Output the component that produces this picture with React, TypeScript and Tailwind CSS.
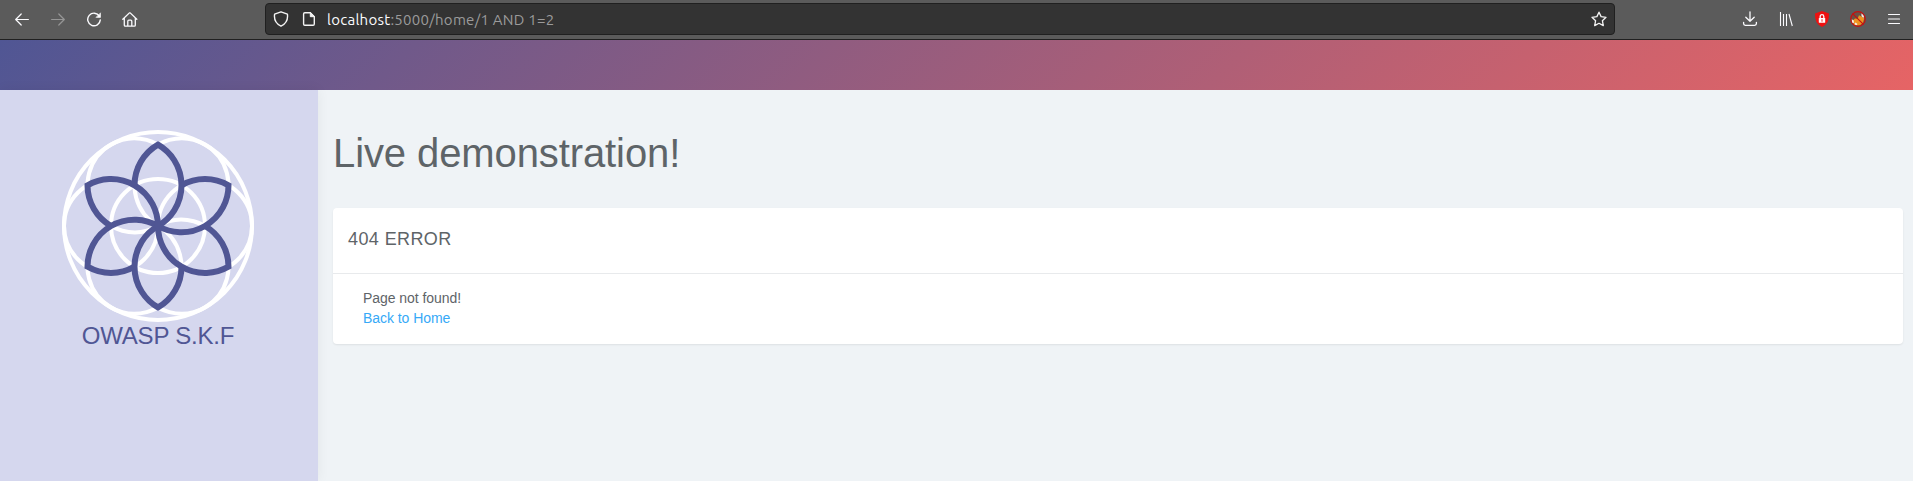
import type { ReactNode } from "react";

function Icon({ children, className = "" }: { children: ReactNode; className?: string }) {
  return (
    <svg
      viewBox="0 0 16 16"
      className={`h-4 w-4 shrink-0 ${className}`}
      fill="none"
      stroke="currentColor"
      strokeWidth="1.2"
      strokeLinecap="round"
      strokeLinejoin="round"
    >
      {children}
    </svg>
  );
}

function Toolbar() {
  return (
    <header className="flex h-10 shrink-0 items-start border-b border-[#202020] bg-[#5b5b5b] text-[#fbfbfe]">
      <nav className="flex w-[265px] gap-5 pt-[11px] pl-[14px]">
        <Icon>
          <path d="M14.4 8.5H1.7M7.2 3 1.7 8.5 7.2 14" />
        </Icon>
        <Icon className="text-[#969696]">
          <path d="M1.6 8.5h12.7M8.8 3l5.5 5.5L8.8 14" />
        </Icon>
        <Icon>
          <path d="M13.4 5.2A6.3 6.3 0 1 0 14.3 8.9" strokeWidth="1.4" />
          <path d="M14.5 2.2v4.2h-4.2z" fill="currentColor" strokeWidth="0.6" />
        </Icon>
        <Icon>
          <path d="M.8 8.3 7.4 1.9h.8l6.6 6.4M2.3 7v7.2q0 1 1 1h9q1 0 1-1V7M5.8 15V10.2q0-1 1-1h2q1 0 1 1V15" strokeWidth="1.3" />
        </Icon>
      </nav>
      <div className="mt-[3px] flex h-8 w-[1350px] items-center rounded border border-[#202020] bg-[#333333] pr-[7px] pl-[7px]">
        <Icon className="text-[#f4f4f4]">
          <path d="M8 .8 14.4 3.1Q15.6 11.5 8 15.2.4 11.5 1.6 3.1z" strokeWidth="1.4" />
        </Icon>
        <Icon className="ml-3 text-[#f4f4f4]">
          <path d="M9.3 1.7H3.8q-1.2 0-1.2 1.2v10.2q0 1.2 1.2 1.2h8.3q1.2 0 1.2-1.2V5.7z" strokeWidth="1.4" />
          <path d="M9.3 1.7v4h4z" fill="currentColor" strokeWidth="1" />
        </Icon>
        <span className="ml-[10px] pt-0.5 font-['Ubuntu','Noto_Sans',sans-serif] text-[15px] leading-5 tracking-[0.26px] whitespace-pre text-[#9b9b9b]">
          <span className="text-[#fbfbfe]">localhost</span>:5000/home/1 AND 1=2
        </span>
        <Icon className="ml-auto text-[#f4f4f4]">
          <path d="m8 1.2 2.1 4.4 4.9.7-3.6 3.4.9 4.9L8 12.3l-4.3 2.3.9-4.9L1 6.3l4.9-.7z" strokeWidth="1.3" />
        </Icon>
      </div>
      <div className="flex gap-5 pt-[11px] pl-[127px]">
        <Icon>
          <path d="M8 .8v9.4M3.8 6.2 8 10.3l4.2-4.1M1.6 11.3v1.3q0 1.7 1.7 1.7h9.4q1.7 0 1.7-1.7v-1.3" strokeWidth="1.3" />
        </Icon>
        <Icon>
          <path d="M2.5 1v14M5.5 3v12M8.5 3v12M11 3l3.3 12" strokeLinecap="butt" strokeWidth="1.1" />
        </Icon>
        <Icon>
          <path d="M8 0 15 2.4Q15.7 12.5 8 16 .3 12.5 1 2.4z" fill="#ee1111" stroke="none" />
          <rect x="4.8" y="7" width="6.4" height="4.8" rx=".5" fill="#ffffff" stroke="none" />
          <path d="M6.2 7V5.4q0-1.7 1.8-1.7t1.8 1.7V7" strokeWidth="1.3" />
          <path d="M8 8.6v1.7" stroke="#ee1111" strokeWidth=".9" />
        </Icon>
        <Icon>
          <circle cx="8" cy="8" r="7.2" fill="#6b5145" stroke="none" />
          <path d="M2.5 9.8 5 7.5l2.6.3L9 4.2l2.7 1.5 2.5 1.5-1.1 4.6-3.5 2.6-5.5-.2z" fill="#ee9420" stroke="none" />
          <path d="m11.4 1.9 2.7 2.9-.6 2.2-2-1.8zM1.6 8.3l2 1 .5 2.5-2 .1zM5.5 11.6l2 1.3-1 1.4-2.2-1z" fill="#f2eee8" stroke="none" />
          <circle cx="8" cy="8" r="7.3" stroke="#c70f0f" strokeWidth="1.2" />
          <path d="m2.8 2.8 10.4 10.4" stroke="#c70f0f" />
        </Icon>
        <Icon>
          <path d="M2.5 3.5h11M2.5 8h11M2.5 12.5h11" />
        </Icon>
      </div>
    </header>
  );
}

const ANGLES = [0, 60, 120, 180, 240, 300];

function FlowerLogo() {
  return (
    <svg viewBox="-96 -96 192 192" className="h-48 w-48" fill="none">
      <g stroke="#ffffff" strokeWidth="4">
        <circle r="94" />
        <circle r="47" />
        {ANGLES.map((a) => (
          <circle key={a} cx="47" r="47" transform={`rotate(${a})`} />
        ))}
      </g>
      <g stroke="#505694" strokeWidth="6">
        {ANGLES.map((a) => (
          <path key={a} d="M0 0A47 47 0 0 0 0-81.4 47 47 0 0 0-23.5-40.7" transform={`rotate(${a})`} />
        ))}
      </g>
    </svg>
  );
}

export default function App() {
  return (
    <div className="flex h-[481px] w-full flex-col overflow-hidden bg-[#eff3f6] font-['Nimbus_Sans','Liberation_Sans',Arial,sans-serif] text-[#5e6468]">
      <Toolbar />
      <div className="h-[50px] shrink-0 bg-[linear-gradient(135deg,#505694,#e66465)]" />
      <div className="flex min-h-0 flex-1">
        <aside className="flex w-[318px] shrink-0 flex-col items-center bg-[#d5d7ee] pt-10 pr-[2px] shadow-[0_0_12px_rgba(0,0,0,0.06)]">
          <FlowerLogo />
          <span className="text-2xl leading-7 tracking-[-0.2px] whitespace-nowrap text-[#505694]">OWASP S.K.F</span>
        </aside>
        <main className="flex-1 pt-[38px] pr-[10px] pl-[15px]">
          <h1 className="text-[40px] leading-[50px] tracking-[-0.1px]">Live demonstration!</h1>
          <section className="mt-[30px] h-[136px] rounded bg-white shadow-[0_1px_2px_rgba(0,0,0,0.08)]">
            <h2 className="h-[66px] border-b border-[#e8eaec] pt-[19px] pl-[15px] text-lg leading-6 tracking-[0.4px]">404 ERROR</h2>
            <div className="pt-[14px] pl-[30px] text-sm leading-5 tracking-[-0.05px]">
              <p>Page not found!</p>
              <a href="#" className="block w-fit text-[#36a9f7]">Back to Home</a>
            </div>
          </section>
        </main>
      </div>
    </div>
  );
}
